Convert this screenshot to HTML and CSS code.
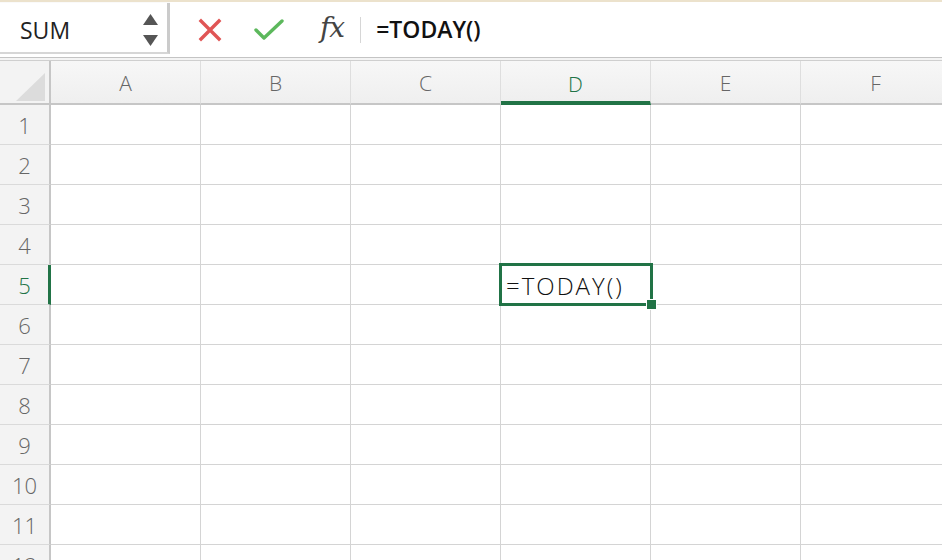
FILE: index.html
```html
<!DOCTYPE html>
<html lang="en">
<head>
<meta charset="UTF-8">
<title>Sheet - TODAY</title>
<link rel="stylesheet" href="styles.css">
</head>
<body>
<div class="app">
  <div class="toolbar">
    <div class="namebox">
      <span class="name">SUM</span>
      <span class="spin">
        <svg width="15" height="34" viewBox="0 0 15 34">
          <path d="M7.5 1 L15 12 L0 12 Z" fill="#555"/>
          <path d="M0 22 L15 22 L7.5 33 Z" fill="#555"/>
        </svg>
      </span>
    </div>
    <div class="formula">
      <svg class="icon" width="26" height="26" viewBox="0 0 26 26">
        <path d="M4 4 L22 22 M22 4 L4 22" stroke="#e05555" stroke-width="3.4" stroke-linecap="square"/>
      </svg>
      <svg class="icon" width="30" height="24" viewBox="0 0 30 24">
        <path d="M2 12 L10 20 L28 3" fill="none" stroke="#5cb85c" stroke-width="3.4" stroke-linecap="round" stroke-linejoin="round"/>
      </svg>
      <span class="fx">fx</span>
      <span class="sep"></span>
      <div class="input">=TODAY()</div>
    </div>
  </div>
  <div class="rule"></div>

  <div class="sheet">
    <div class="corner"><span class="tri"></span></div>
    <div class="colhead">A</div>
    <div class="colhead">B</div>
    <div class="colhead">C</div>
    <div class="colhead active">D</div>
    <div class="colhead">E</div>
    <div class="colhead">F</div>

    <div class="rowhead">1</div><div class="cell"></div><div class="cell"></div><div class="cell"></div><div class="cell"></div><div class="cell"></div><div class="cell"></div>
    <div class="rowhead">2</div><div class="cell"></div><div class="cell"></div><div class="cell"></div><div class="cell"></div><div class="cell"></div><div class="cell"></div>
    <div class="rowhead">3</div><div class="cell"></div><div class="cell"></div><div class="cell"></div><div class="cell"></div><div class="cell"></div><div class="cell"></div>
    <div class="rowhead">4</div><div class="cell"></div><div class="cell"></div><div class="cell"></div><div class="cell"></div><div class="cell"></div><div class="cell"></div>
    <div class="rowhead active">5</div><div class="cell"></div><div class="cell"></div><div class="cell"></div>
    <div class="cell selected"><span class="value">=TODAY()</span><span class="frame"></span><span class="handle"></span></div>
    <div class="cell"></div><div class="cell"></div>
    <div class="rowhead">6</div><div class="cell"></div><div class="cell"></div><div class="cell"></div><div class="cell"></div><div class="cell"></div><div class="cell"></div>
    <div class="rowhead">7</div><div class="cell"></div><div class="cell"></div><div class="cell"></div><div class="cell"></div><div class="cell"></div><div class="cell"></div>
    <div class="rowhead">8</div><div class="cell"></div><div class="cell"></div><div class="cell"></div><div class="cell"></div><div class="cell"></div><div class="cell"></div>
    <div class="rowhead">9</div><div class="cell"></div><div class="cell"></div><div class="cell"></div><div class="cell"></div><div class="cell"></div><div class="cell"></div>
    <div class="rowhead">10</div><div class="cell"></div><div class="cell"></div><div class="cell"></div><div class="cell"></div><div class="cell"></div><div class="cell"></div>
    <div class="rowhead">11</div><div class="cell"></div><div class="cell"></div><div class="cell"></div><div class="cell"></div><div class="cell"></div><div class="cell"></div>
    <div class="rowhead">12</div><div class="cell"></div><div class="cell"></div><div class="cell"></div><div class="cell"></div><div class="cell"></div><div class="cell"></div>
  </div>
</div>
</body>
</html>
```

FILE: styles.css
```css
body {
  margin: 0;
  font-family: "Open Sans", "Noto Sans", sans-serif;
  background: white;
}
.app {
  width: 942px;
  height: 560px;
  overflow: hidden;
}
.toolbar {
  display: flex;
  height: 52px;
  border-top: 2px solid #ece2cc;
  background: #fafafa;
}
.namebox {
  width: 170px;
  margin-top: 1px;
  background: white;
  border-right: 3px solid #cbcbcb;
  border-bottom: 2px solid #d6d6d6;
  display: flex;
  align-items: center;
  justify-content: space-between;
  padding: 4px 9px 0 20px;
  box-sizing: border-box;
}
.name {
  font-size: 23px;
  color: #222;
}
.spin svg {
  display: block;
}
.formula {
  flex: 1;
  display: flex;
  align-items: center;
  background: white;
  padding-left: 27px;
  padding-top: 4px;
}
.icon {
  margin-right: 31px;
}
.fx {
  font-family: "DejaVu Serif", "Liberation Serif", serif;
  font-style: italic;
  font-size: 28px;
  color: #444;
  letter-spacing: -1px;
  margin-left: 5px;
  padding-bottom: 6px;
}
.sep {
  width: 1px;
  height: 26px;
  background: #d6d6d6;
  margin: 0 15px 0 16px;
}
.input {
  font-size: 23px;
  font-weight: 600;
  color: #111;
  padding-bottom: 2px;
}
.rule {
  margin-top: 3px;
  border-top: 1px solid #c4c4c4;
  border-bottom: 1px solid #cfcfcf;
  box-sizing: border-box;
  height: 4px;
  background: #f4f4f4;
}
.sheet {
  display: grid;
  grid-template-columns: 51px repeat(6, 150px);
  grid-auto-rows: 40px;
  grid-template-rows: 44px;
}
.corner, .colhead, .rowhead {
  background: #f3f3f3;
  color: #666;
  font-size: 21px;
  font-weight: 300;
  display: flex;
  align-items: center;
  justify-content: center;
  box-sizing: border-box;
}
.corner {
  border-right: 2px solid #c6c6c6;
  border-bottom: 2px solid #c6c6c6;
  position: relative;
}
.tri {
  position: absolute;
  left: 16px;
  top: 12px;
  width: 0;
  height: 0;
  border-left: 29px solid transparent;
  border-bottom: 28px solid #dcdcdc;
}
.colhead {
  border-right: 1px solid #dedede;
  border-bottom: 2px solid #c6c6c6;
  padding-top: 2px;
  background: linear-gradient(#f7f7f7, #efefef);
}
.colhead.active {
  color: #217346;
  border-bottom: 4px solid #217346;
  padding-top: 6px;
}
.rowhead {
  border-right: 2px solid #c6c6c6;
  border-bottom: 1px solid #dadada;
  font-size: 22px;
  padding-top: 1px;
}
.rowhead.active {
  color: #217346;
  border-right: 3px solid #217346;
  padding-left: 1px;
}
.cell {
  border-right: 1px solid #d4d4d4;
  border-bottom: 1px solid #d4d4d4;
  box-sizing: border-box;
}
.cell.selected {
  position: relative;
  display: flex;
  align-items: center;
}
.value {
  font-size: 24px;
  font-weight: 300;
  letter-spacing: 2px;
  color: #111;
  padding-left: 5px;
  padding-top: 1px;
}
.frame {
  position: absolute;
  left: -2px;
  top: -2px;
  right: -3px;
  bottom: -2px;
  border: 3px solid #217346;
}
.handle {
  position: absolute;
  right: -7px;
  bottom: -6px;
  width: 9px;
  height: 9px;
  background: #217346;
  border: 1px solid white;
}
```
